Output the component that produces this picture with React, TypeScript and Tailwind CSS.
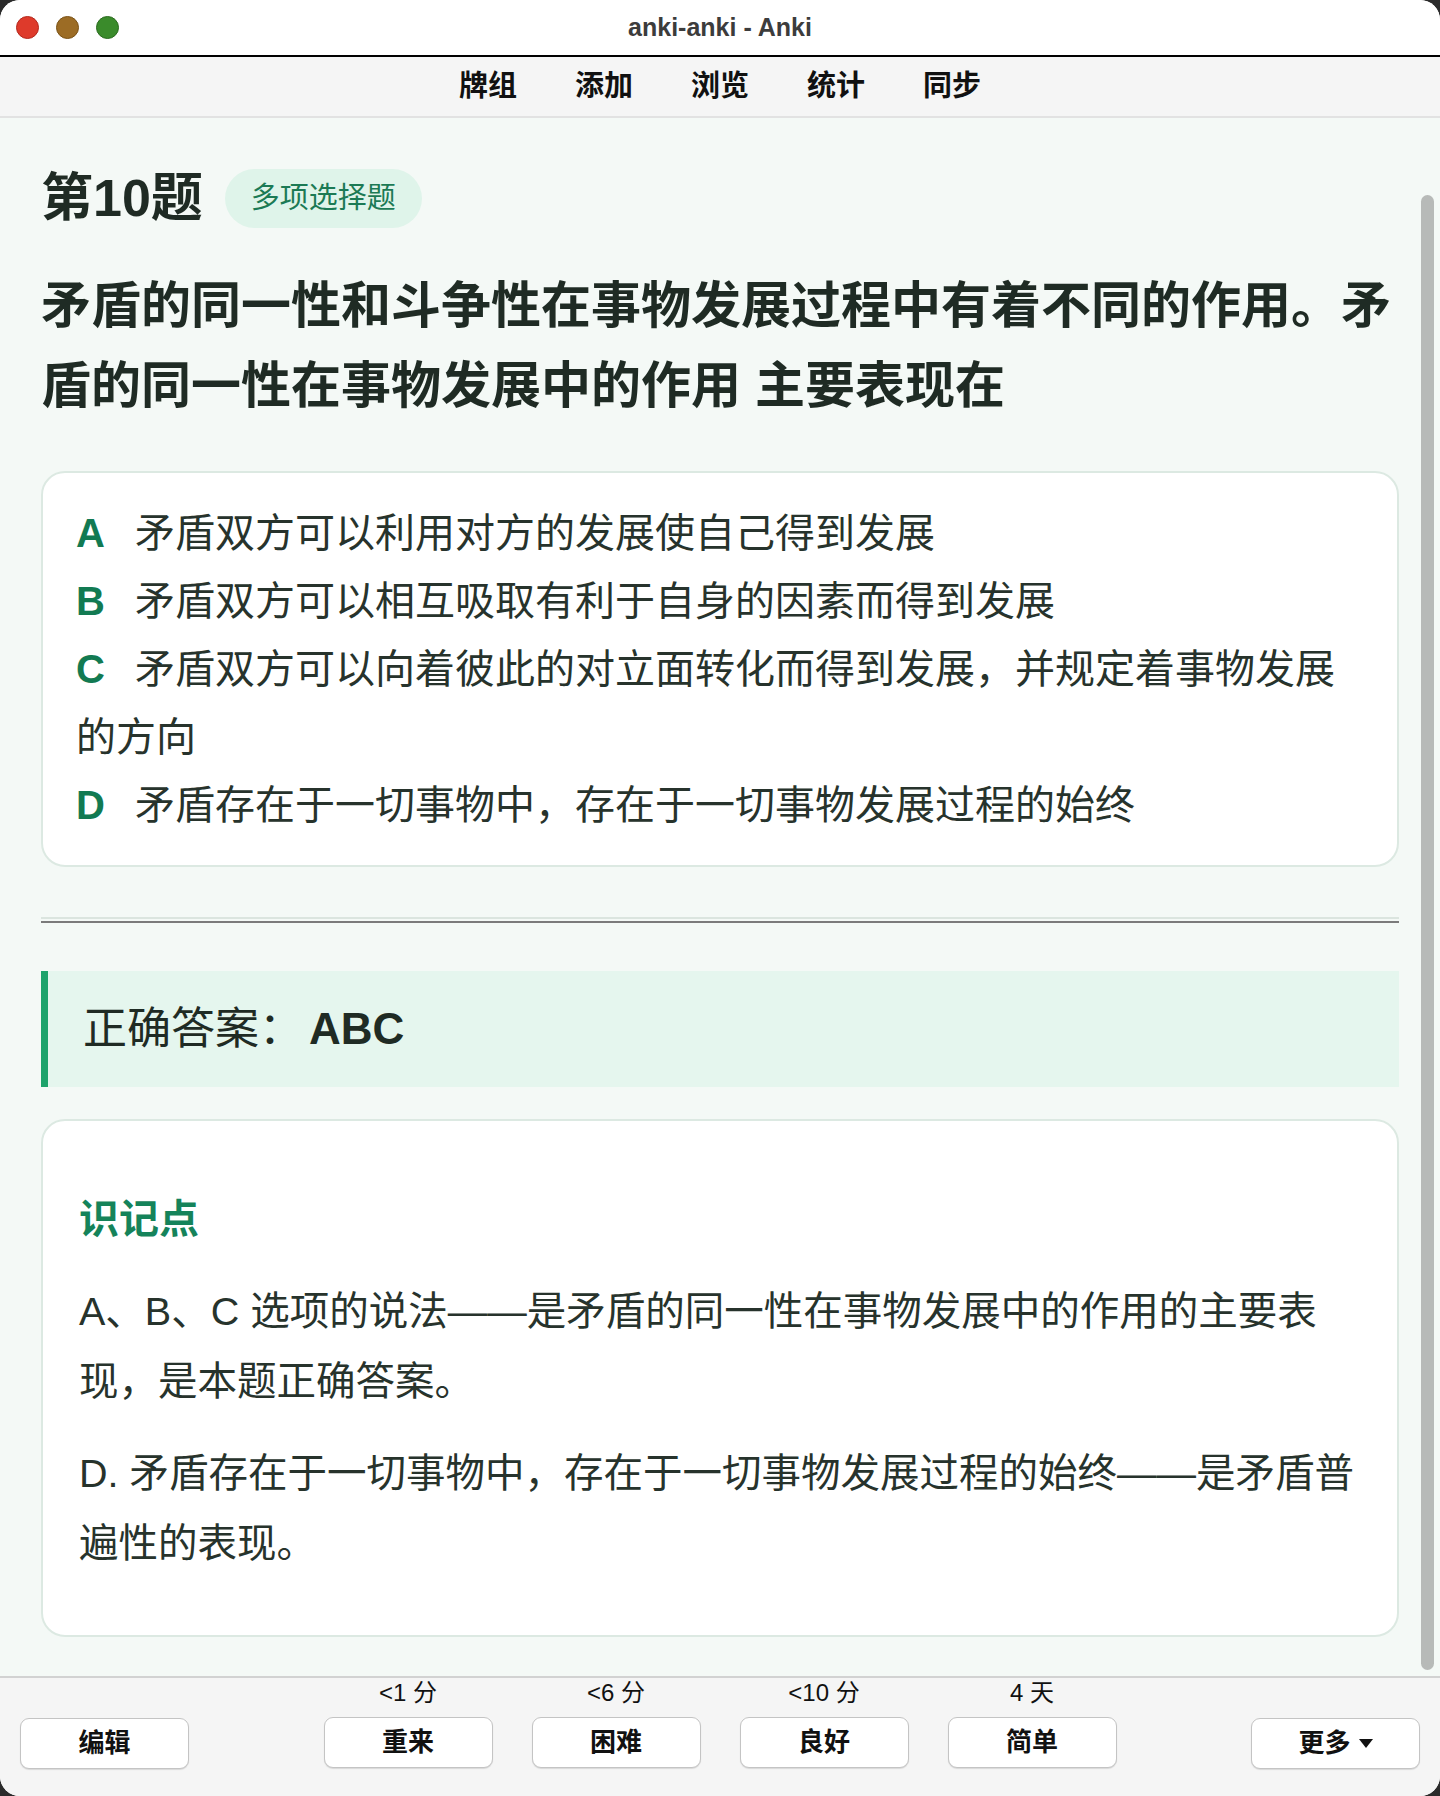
import React from "react";

const FONT = { fontFamily: '"Liberation Sans", "Noto Sans CJK SC", sans-serif' };

const options = [
  { key: "A", text: "矛盾双方可以利用对方的发展使自己得到发展" },
  { key: "B", text: "矛盾双方可以相互吸取有利于自身的因素而得到发展" },
  { key: "C", text: "矛盾双方可以向着彼此的对立面转化而得到发展，并规定着事物发展的方向" },
  { key: "D", text: "矛盾存在于一切事物中，存在于一切事物发展过程的始终" },
];

const answers = [
  { time: "<1 分", label: "重来" },
  { time: "<6 分", label: "困难" },
  { time: "<10 分", label: "良好" },
  { time: "4 天", label: "简单" },
];

function Btn({ children }: { children: React.ReactNode }) {
  return (
    <button className="flex h-[51px] w-[169px] items-center justify-center gap-[8px] rounded-[9px] border-[1.5px] border-[#c4c4c4] bg-white text-[26px] font-bold text-[#111] shadow-[0_1px_1px_rgba(0,0,0,0.12)]">
      {children}
    </button>
  );
}

export default function App() {
  return (
    <div className="h-[1796px] w-[1440px] bg-[#2b2b2b]" style={FONT}>
      <div className="flex h-full flex-col overflow-hidden rounded-[20px] bg-white">
        {/* title bar */}
        <div className="grid h-[57px] shrink-0 grid-cols-[1fr_auto_1fr] items-center border-b-2 border-black bg-white">
          <div className="flex items-center gap-[17px] pl-[16px]">
            <span className="h-[23px] w-[23px] rounded-full border border-[#b3281d] bg-[#de3a2b]" />
            <span className="h-[23px] w-[23px] rounded-full border border-[#7a5216] bg-[#9c6c25]" />
            <span className="h-[23px] w-[23px] rounded-full border border-[#2b6b1f] bg-[#3a8b2b]" />
          </div>
          <div className="text-[25px] font-semibold text-[#3c3c3c]">anki-anki - Anki</div>
          <div />
        </div>

        {/* top nav */}
        <div className="flex h-[61px] shrink-0 items-center justify-center gap-[58px] border-b-2 border-[#e2e2e2] bg-[#f5f5f5]">
          {["牌组", "添加", "浏览", "统计", "同步"].map((t) => (
            <span key={t} className="text-[29px] font-bold text-[#111]">
              {t}
            </span>
          ))}
        </div>

        {/* card content */}
        <div className="relative flex-1 overflow-hidden bg-[#f4f9f6] px-[41px] pt-[51px]">
          <div className="flex items-center gap-[22px]">
            <h1 className="text-[52px] font-bold leading-[59px] text-[#1f2b24]">第10题</h1>
            <span className="flex h-[59px] items-center rounded-full bg-[#dff4ea] px-[26px] text-[29px] text-[#1c7a55]">
              多项选择题
            </span>
          </div>

          <p className="mt-[38px] text-[50px] font-bold leading-[80px] text-[#1f2b24]">
            矛盾的同一性和斗争性在事物发展过程中有着不同的作用。矛盾的同一性在事物发展中的作用 主要表现在
          </p>

          <div className="mt-[45px] rounded-[24px] border-2 border-[#dce9e2] bg-white px-[33px] py-[26px]">
            {options.map((o) => (
              <div key={o.key} className="text-[40px] leading-[68px] text-[#27332c]">
                <span className="inline-block w-[59px] font-bold text-[#127a52]">{o.key}</span>
                {o.text}
              </div>
            ))}
          </div>

          <div className="mt-[50px]">
            <div className="h-[2px] bg-[#dbe5df]" />
            <div className="mt-[2px] h-[2px] bg-[#7b7b7b]" />
          </div>

          <div className="mt-[48px] flex h-[116px] items-center border-l-[7px] border-[#1ea36b] bg-[#e5f6ee] pl-[35px] text-[44px] text-[#1f2b24]">
            正确答案：<span className="ml-[6px] font-bold">ABC</span>
          </div>

          <div className="mt-[32px] rounded-[24px] border-2 border-[#dce9e2] bg-white px-[36px] pb-[57px] pt-[36px]">
            <h3 className="mt-[32px] text-[40px] font-bold leading-[60px] text-[#15835a]">识记点</h3>
            <p className="mt-[27px] text-[39.5px] leading-[70px] text-[#27332c]">
              A、B、C 选项的说法——是矛盾的同一性在事物发展中的作用的主要表现，是本题正确答案。
            </p>
            <p className="mt-[22px] text-[39.5px] leading-[70px] text-[#27332c]">
              D. 矛盾存在于一切事物中，存在于一切事物发展过程的始终——是矛盾普遍性的表现。
            </p>
          </div>

          {/* overlay scrollbar */}
          <div className="absolute bottom-[6px] right-[6px] top-[77px] w-[13px] rounded-full bg-[#b7bab8]" />
        </div>

        {/* bottom answer bar */}
        <div className="flex h-[120px] shrink-0 items-start justify-between border-t-2 border-[#d2d2d2] bg-[#f5f5f5] px-[20px] pt-[1px]">
          <div className="mt-[39px]">
            <Btn>编辑</Btn>
          </div>
          <div className="flex gap-[39px]">
            {answers.map((a) => (
              <div key={a.label} className="flex flex-col items-center">
                <span className="mb-[10px] h-[28px] text-[24px] leading-[28px] text-[#111]">{a.time}</span>
                <Btn>{a.label}</Btn>
              </div>
            ))}
          </div>
          <div className="mt-[39px]">
            <Btn>
              更多
              <svg width="14" height="9" viewBox="0 0 14 9">
                <path d="M0 0 L14 0 L7 9 Z" fill="#111" />
              </svg>
            </Btn>
          </div>
        </div>
      </div>
    </div>
  );
}
